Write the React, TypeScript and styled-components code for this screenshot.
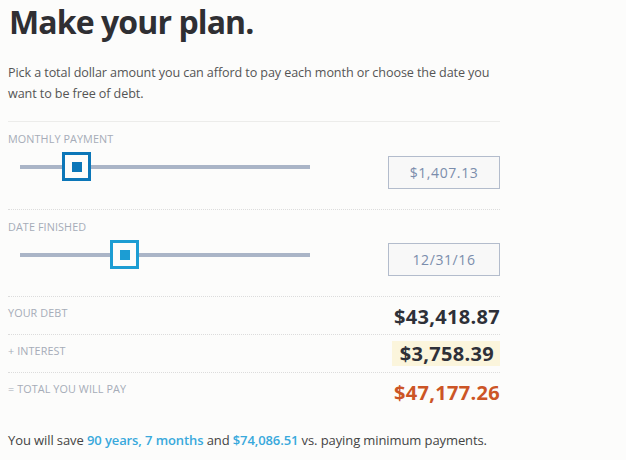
import React from 'react';
import styled, { createGlobalStyle } from 'styled-components';

const GlobalStyle = createGlobalStyle`
  body {
    margin: 0;
    background: #fcfcfb;
    font-family: "Open Sans", "Liberation Sans", sans-serif;
  }
`;

type SliderProps = { pos: number; tone: string };

const sliders = [
  { label: 'MONTHLY PAYMENT', pos: 42, value: '$1,407.13', tone: '#0b76b8', inputGap: 4 },
  { label: 'DATE FINISHED', pos: 90, value: '12/31/16', tone: '#1c9dd3', inputGap: 3 },
];

const results = [
  { label: 'YOUR DEBT', value: '$43,418.87', kind: 'plain' },
  { label: '+ INTEREST', value: '$3,758.39', kind: 'mark' },
  { label: '= TOTAL YOU WILL PAY', value: '$47,177.26', kind: 'total' },
];

const Slider: React.FC<SliderProps> = ({ pos, tone }) => (
  <Track>
    <Thumb style={{ left: pos }} $tone={tone}>
      <Dot $tone={tone} />
    </Thumb>
  </Track>
);

const App: React.FC = () => (
  <>
    <GlobalStyle />
    <Page>
      <Title>Make your plan.</Title>
      <Intro>
        Pick a total dollar amount you can afford to pay each month or choose the date you
        want to be free of debt.
      </Intro>
      {sliders.map((s, i) => (
        <SliderSection key={s.label} $dotted={i > 0}>
          <Label>{s.label}</Label>
          <SliderRow>
            <Slider pos={s.pos} tone={s.tone} />
            <ValueBox $gap={s.inputGap}>{s.value}</ValueBox>
          </SliderRow>
        </SliderSection>
      ))}
      {results.map((r) => (
        <ResultRow key={r.label}>
          <Label>{r.label}</Label>
          <Amount $kind={r.kind}>{r.value}</Amount>
        </ResultRow>
      ))}
      <Summary>
        You will save <Hi>90 years, 7 months</Hi> and <Hi>$74,086.51</Hi> vs. paying minimum
        payments.
      </Summary>
    </Page>
  </>
);

const Page = styled.div`
  width: 492px;
  padding: 0 0 0 8px;
`;

const Title = styled.h1`
  margin: 0;
  padding: 2px 0 0 1px;
  font-size: 32px;
  line-height: 40px;
  font-weight: 700;
  color: #2f2f33;
  letter-spacing: -0.9px;
`;

const Intro = styled.p`
  margin: 20px 0 0;
  padding-bottom: 17px;
  font-size: 12.6px;
  line-height: 21px;
  letter-spacing: -0.1px;
  color: #555;
  border-bottom: 1px solid #ececea;
`;

const SliderSection = styled.div<{ $dotted: boolean }>`
  display: flex;
  flex-direction: column;
  gap: 6px;
  padding: 10px 0 20px;
  border-top: ${(p) => (p.$dotted ? '1px dotted #dcdcdc' : 'none')};
`;

const Label = styled.div`
  font-size: 10.8px;
  line-height: 14px;
  color: #a6acb8;
  letter-spacing: 0.1px;
`;

const SliderRow = styled.div`
  display: flex;
  justify-content: space-between;
  align-items: flex-start;
`;

const Track = styled.div`
  position: relative;
  width: 290px;
  height: 29px;
  margin-left: 12px;
  &::before {
    content: '';
    position: absolute;
    left: 0;
    right: 0;
    top: 13px;
    height: 4px;
    background: #aab5c7;
  }
`;

const Thumb = styled.div<{ $tone: string }>`
  position: absolute;
  top: 0;
  width: 23px;
  height: 23px;
  border: 3px solid ${(p) => p.$tone};
  background: #fcfcfb;
  display: flex;
  align-items: center;
  justify-content: center;
`;

const Dot = styled.div<{ $tone: string }>`
  width: 10px;
  height: 10px;
  background: ${(p) => p.$tone};
`;

const ValueBox = styled.div<{ $gap: number }>`
  margin-top: ${(p) => p.$gap}px;
  width: 110px;
  height: 31px;
  border: 1px solid #b3bccc;
  background: #f8f8f8;
  display: flex;
  align-items: center;
  justify-content: center;
  font-size: 14px;
  letter-spacing: 0.6px;
  color: #7b8dac;
`;

const ResultRow = styled.div`
  display: flex;
  justify-content: space-between;
  align-items: flex-start;
  height: 37px;
  border-top: 1px dotted #dcdcdc;
  & > div:first-child {
    padding-top: 9px;
  }
`;

const Amount = styled.div<{ $kind: string }>`
  margin-top: ${(p) => (p.$kind === 'mark' ? 6 : 8)}px;
  padding: ${(p) => (p.$kind === 'mark' ? '0 6px 0 8px' : '0')};
  font-size: 20px;
  line-height: ${(p) => (p.$kind === 'mark' ? 25 : 24)}px;
  font-weight: 700;
  letter-spacing: 0.3px;
  color: ${(p) => (p.$kind === 'total' ? '#cc5526' : '#2e3038')};
  background: ${(p) => (p.$kind === 'mark' ? '#fbf5dc' : 'transparent')};
`;

const Summary = styled.p`
  margin: 20px 0 0;
  font-size: 13px;
  line-height: 20px;
  letter-spacing: -0.1px;
  color: #444;
`;

const Hi = styled.span`
  color: #39a9dc;
  font-weight: 600;
`;

export default App;
